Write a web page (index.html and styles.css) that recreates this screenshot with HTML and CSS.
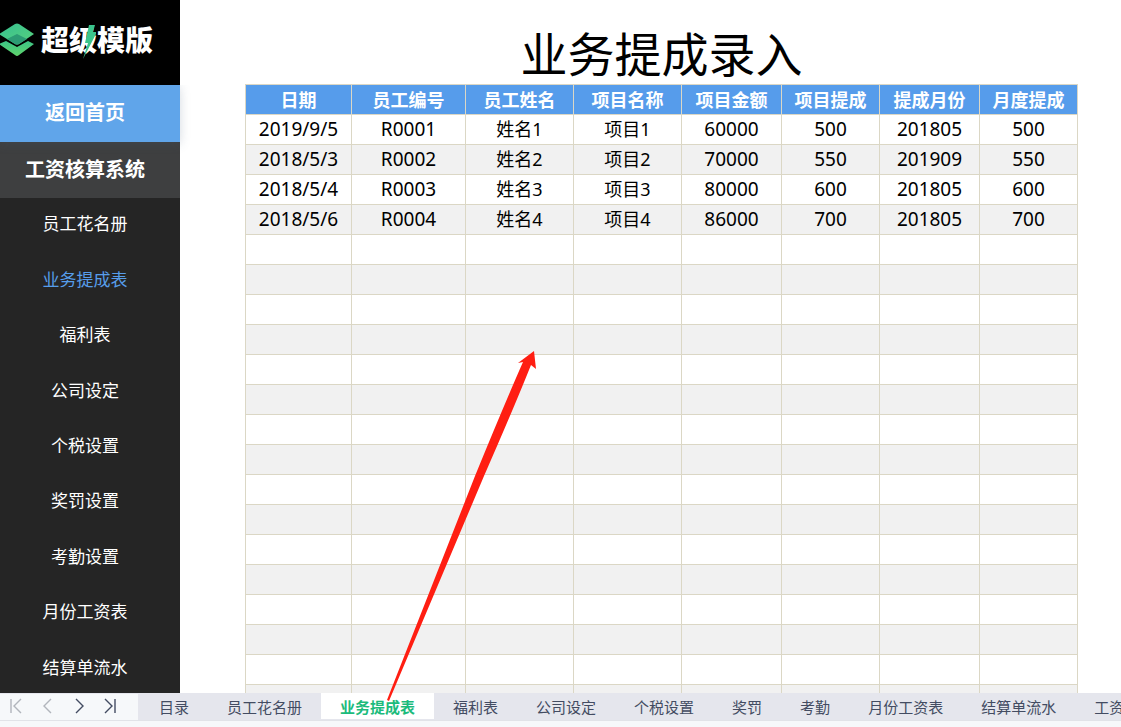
FILE: index.html
```html
<!DOCTYPE html>
<html lang="zh-CN">
<head>
<meta charset="utf-8">
<title>业务提成录入</title>
<link rel="stylesheet" href="styles.css">
</head>
<body>
<div class="workspace">
  <aside class="sidebar">
    <div class="brand">
      <svg class="brand-mark" viewBox="0 0 34 34" aria-hidden="true">
        <defs>
          <linearGradient id="top" x1="0" y1="0" x2="1" y2="1"><stop offset="0" stop-color="#36bf91"/><stop offset="1" stop-color="#58d27c"/></linearGradient>
          <linearGradient id="bottom" x1="0" y1="0" x2="0" y2="1"><stop offset="0" stop-color="#3cc487"/><stop offset="1" stop-color="#5fd36b"/></linearGradient>
        </defs>
        <path fill="url(#bottom)" d="M6 18 17 24 28 18 34 21 19 32Q17 34 15 32L-1 21Z"/>
        <path fill="url(#top)" d="M-1 11 15 1Q17 0 19 1L34 11 19 21Q17 22 15 21Z"/>
        <path fill="#2c9c74" d="M7 16 17 11 27 16 19 21Q17 22 15 21Z"/>
      </svg>
      <span class="brand-name">超级模版</span>
      <svg class="brand-bolt" viewBox="0 0 14 35" aria-hidden="true"><path fill="#3bc48c" d="M7 1h6l-2 7h4L1 35l5-16H3Z"/></svg>
    </div>
    <a class="home" href="#">返回首页</a>
    <h2 class="system">工资核算系统</h2>
    <nav class="menu">
      <a href="#">员工花名册</a>
      <a class="current" href="#">业务提成表</a>
      <a href="#">福利表</a>
      <a href="#">公司设定</a>
      <a href="#">个税设置</a>
      <a href="#">奖罚设置</a>
      <a href="#">考勤设置</a>
      <a href="#">月份工资表</a>
      <a href="#">结算单流水</a>
    </nav>
  </aside>
  <main class="sheet">
    <h1>业务提成录入</h1>
    <table>
      <colgroup><col class="c-date"><col class="c-id"><col class="c-wide"><col class="c-wide"><col class="c-mid"><col class="c-slim"><col class="c-mid"><col class="c-slim"></colgroup>
      <thead>
        <tr><th>日期</th><th>员工编号</th><th>员工姓名</th><th>项目名称</th><th>项目金额</th><th>项目提成</th><th>提成月份</th><th>月度提成</th></tr>
      </thead>
      <tbody>
        <tr><td>2019/9/5</td><td>R0001</td><td class="han">姓名1</td><td class="han">项目1</td><td>60000</td><td>500</td><td>201805</td><td>500</td></tr>
        <tr><td>2018/5/3</td><td>R0002</td><td class="han">姓名2</td><td class="han">项目2</td><td>70000</td><td>550</td><td>201909</td><td>550</td></tr>
        <tr><td>2018/5/4</td><td>R0003</td><td class="han">姓名3</td><td class="han">项目3</td><td>80000</td><td>600</td><td>201805</td><td>600</td></tr>
        <tr><td>2018/5/6</td><td>R0004</td><td class="han">姓名4</td><td class="han">项目4</td><td>86000</td><td>700</td><td>201805</td><td>700</td></tr>
        <tr><td></td><td></td><td></td><td></td><td></td><td></td><td></td><td></td></tr>
        <tr><td></td><td></td><td></td><td></td><td></td><td></td><td></td><td></td></tr>
        <tr><td></td><td></td><td></td><td></td><td></td><td></td><td></td><td></td></tr>
        <tr><td></td><td></td><td></td><td></td><td></td><td></td><td></td><td></td></tr>
        <tr><td></td><td></td><td></td><td></td><td></td><td></td><td></td><td></td></tr>
        <tr><td></td><td></td><td></td><td></td><td></td><td></td><td></td><td></td></tr>
        <tr><td></td><td></td><td></td><td></td><td></td><td></td><td></td><td></td></tr>
        <tr><td></td><td></td><td></td><td></td><td></td><td></td><td></td><td></td></tr>
        <tr><td></td><td></td><td></td><td></td><td></td><td></td><td></td><td></td></tr>
        <tr><td></td><td></td><td></td><td></td><td></td><td></td><td></td><td></td></tr>
        <tr><td></td><td></td><td></td><td></td><td></td><td></td><td></td><td></td></tr>
        <tr><td></td><td></td><td></td><td></td><td></td><td></td><td></td><td></td></tr>
        <tr><td></td><td></td><td></td><td></td><td></td><td></td><td></td><td></td></tr>
        <tr><td></td><td></td><td></td><td></td><td></td><td></td><td></td><td></td></tr>
        <tr><td></td><td></td><td></td><td></td><td></td><td></td><td></td><td></td></tr>
        <tr><td></td><td></td><td></td><td></td><td></td><td></td><td></td><td></td></tr>
      </tbody>
    </table>
  </main>
</div>
<footer class="tabbar">
  <div class="pager">
    <button type="button" aria-label="第一个" disabled><svg viewBox="0 0 16 18"><path d="M4 2v14M14 2 7 9l7 7"/></svg></button>
    <button type="button" aria-label="上一个" disabled><svg viewBox="0 0 16 18"><path d="M12 2 5 9l7 7"/></svg></button>
    <button type="button" aria-label="下一个"><svg viewBox="0 0 16 18"><path d="m5 2 7 7-7 7"/></svg></button>
    <button type="button" aria-label="最后一个"><svg viewBox="0 0 16 18"><path d="m2 2 7 7-7 7M12 2v14"/></svg></button>
  </div>
  <div class="tabs">
    <button type="button">目录</button>
    <button type="button">员工花名册</button>
    <button type="button" class="active">业务提成表</button>
    <button type="button">福利表</button>
    <button type="button">公司设定</button>
    <button type="button">个税设置</button>
    <button type="button">奖罚</button>
    <button type="button">考勤</button>
    <button type="button">月份工资表</button>
    <button type="button">结算单流水</button>
    <button type="button">工资</button>
  </div>
</footer>
<svg class="pointer" viewBox="0 0 150 352" aria-hidden="true"><path fill="#ff1e12" d="M147 1 149 19 144 15Q126 60 97 126L2 351 0 350 88 126Q117 55 136 12L131 13Z"/></svg>
</body>
</html>
```
FILE: styles.css
```css
* { box-sizing: border-box; }

body {
  margin: 0;
  height: 100vh;
  display: flex;
  flex-direction: column;
  overflow: hidden;
  position: relative;
  background: #fff;
  color: #000;
  font-family: "Noto Sans", "Noto Sans CJK SC", sans-serif;
}

a { text-decoration: none; }

.workspace {
  flex: 1;
  min-height: 0;
  display: flex;
}

.sidebar {
  flex: 0 0 180px;
  display: flex;
  flex-direction: column;
  background: #252525;
  color: #fff;
  text-align: center;
  font-family: "Noto Sans CJK SC", sans-serif;
}

.brand {
  position: relative;
  flex: 0 0 85px;
  display: flex;
  align-items: center;
  gap: 7px;
  padding-bottom: 6px;
  background: #000;
}

.brand-mark { width: 34px; height: 34px; }

.brand-name {
  padding-bottom: 2px;
  font-size: 28px;
  font-weight: 900;
  line-height: 36px;
}

.brand-bolt {
  position: absolute;
  left: 82px;
  top: 24px;
  width: 14px;
  height: 35px;
}

.home,
.system {
  display: flex;
  align-items: center;
  justify-content: center;
  margin: 0;
  padding: 0 10px 4px 0;
  font-size: 20px;
  font-weight: 700;
  color: #fff;
}

.home {
  flex: 0 0 57px;
  background: #60a5ea;
  box-shadow: 0 2px 10px rgba(70, 90, 120, .22);
  clip-path: inset(0 -12px -12px 0);
}

.system {
  flex: 0 0 56px;
  background: #3e3f40;
}

.menu {
  flex: 1;
  min-height: 0;
  display: grid;
  grid-auto-rows: 1fr;
  margin: -2px 0;
  padding-right: 10px;
}

.menu a {
  display: flex;
  align-items: center;
  justify-content: center;
  padding-bottom: 1px;
  color: #fff;
  font-size: 17px;
  line-height: 24px;
}

.menu a.current { color: #579dea; }

.sheet {
  flex: 1;
  min-width: 0;
  overflow: hidden;
  padding: 20px 43px 0 65px;
}

h1 {
  margin: 0;
  font-size: 47px;
  font-weight: 400;
  line-height: 64px;
  text-align: center;
  font-family: "Noto Sans CJK SC", sans-serif;
}

table {
  width: 100%;
  table-layout: fixed;
  border-collapse: collapse;
}

.c-date { width: 106px; }
.c-id { width: 114px; }
.c-wide { width: 108px; }
.c-mid { width: 100px; }
.c-slim { width: 98px; }

th,
td {
  height: 30px;
  padding: 0 0 2px;
  border: 1px solid #dbd7c5;
  font-size: 19px;
  line-height: 24px;
  text-align: center;
  white-space: nowrap;
}

th {
  background: #569ceb;
  color: #fff;
  font-size: 18px;
  font-weight: 700;
  font-family: "Noto Sans CJK SC", sans-serif;
}

td.han { font-size: 18px; }

tbody tr:nth-child(even) { background: #f1f1f1; }

.tabbar {
  flex: 0 0 34px;
  display: flex;
  align-items: flex-start;
  overflow: hidden;
  background: #f6f8fa;
}

.tabbar button {
  flex: none;
  border: 0;
  background: none;
  font-family: "Noto Sans CJK SC", sans-serif;
  color: #434c62;
}

.pager {
  flex: 0 0 138px;
  display: flex;
  gap: 16px;
  height: 28px;
  padding: 3px 0 0 7px;
  border-top: 1px solid #e5e6ed;
  border-bottom: 1px solid #e1e3e8;
}

.pager button {
  width: 16px;
  height: 18px;
  padding: 0;
}

.tabbar button:disabled { color: #b1b5bc; }

.pager svg {
  display: block;
  width: 16px;
  height: 18px;
  fill: none;
  stroke: currentColor;
  stroke-width: 1.4;
}

.tabs {
  flex: 1;
  min-width: 0;
  display: flex;
  height: 28px;
  padding-left: 2px;
  overflow: hidden;
  background: #e5e6ed;
  border-bottom: 1px solid #e1e3e8;
}

.tabs button {
  height: 27px;
  padding: 0 19px;
  font-size: 15px;
  line-height: 27px;
  white-space: nowrap;
}

.tabs button.active {
  height: 26px;
  background: #fff;
  color: #1cbb7c;
  font-weight: 700;
}

.pointer {
  position: absolute;
  left: 387px;
  top: 350px;
  width: 150px;
  height: 352px;
  pointer-events: none;
}
```
